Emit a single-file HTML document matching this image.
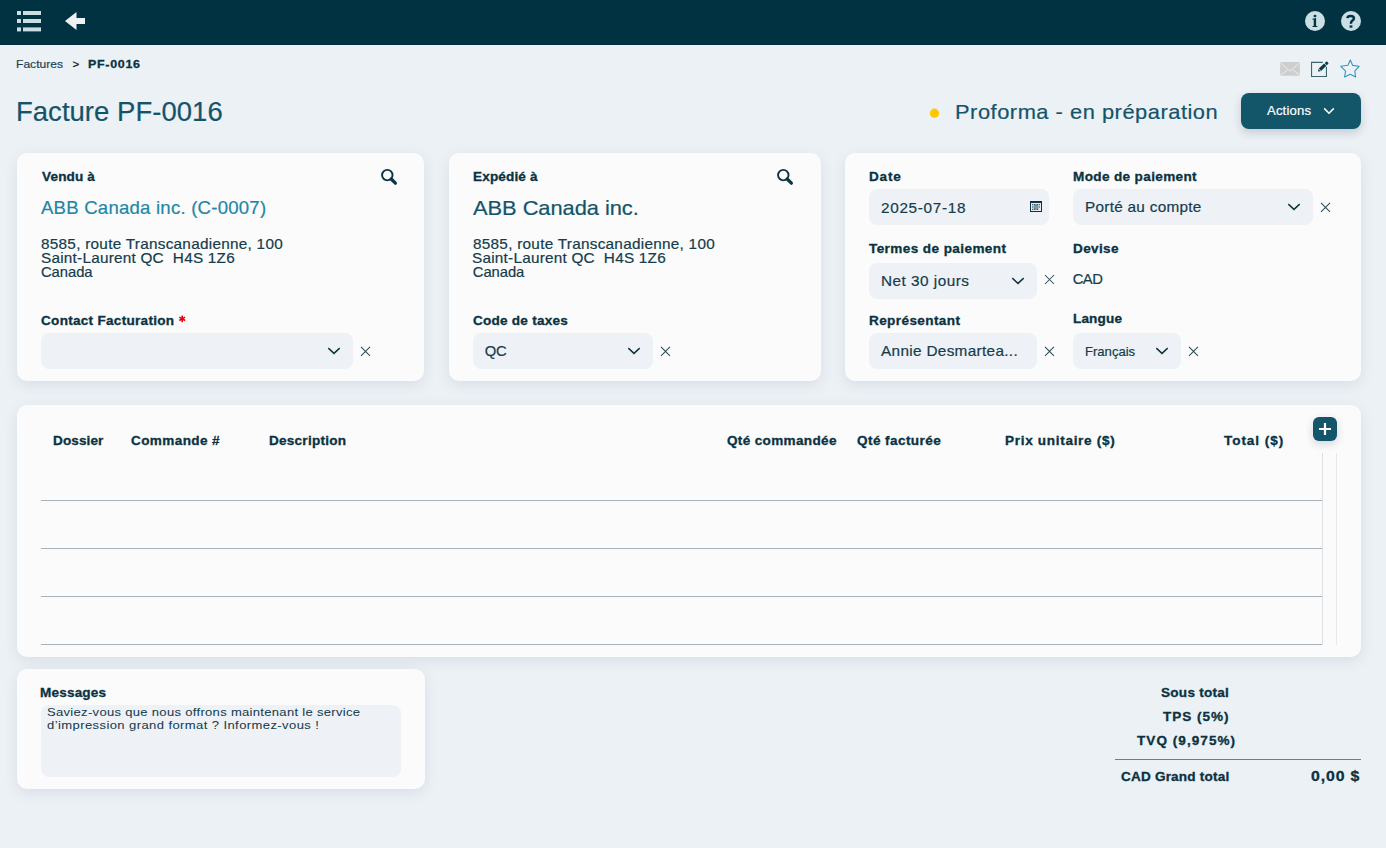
<!DOCTYPE html>
<html><head><meta charset="utf-8"><title>Facture PF-0016</title>
<style>
html,body{margin:0;padding:0;}
body{width:1386px;height:848px;overflow:hidden;position:relative;background:#ecf1f5;font-family:"Liberation Sans",sans-serif;}
.t{position:absolute;white-space:pre;transform-origin:0 0;-webkit-text-stroke:0.2px currentColor;}
.b{-webkit-text-stroke:0.3px currentColor;}
.a{position:absolute;}
.card{position:absolute;background:#fbfbfb;border-radius:10px;box-shadow:0 4px 14px rgba(40,70,110,0.10);}
.inp{position:absolute;background:#eef2f6;border-radius:8px;}
svg{position:absolute;left:0;top:0;overflow:visible;}
</style></head><body>
<div class="a" style="left:0;top:0;width:1386px;height:45px;background:#013241"></div>
<div class="card" style="left:17px;top:153px;width:407px;height:228px"></div>
<div class="card" style="left:449px;top:153px;width:372px;height:228px"></div>
<div class="card" style="left:845px;top:153px;width:516px;height:228px"></div>
<div class="card" style="left:17px;top:405px;width:1344px;height:252px"></div>
<div class="card" style="left:17px;top:669px;width:408px;height:120px"></div>
<div class="inp" style="left:41px;top:333px;width:312px;height:36px"></div>
<div class="inp" style="left:473px;top:333px;width:180px;height:36px"></div>
<div class="inp" style="left:869px;top:189px;width:180px;height:36px"></div>
<div class="inp" style="left:1073px;top:189px;width:240px;height:36px"></div>
<div class="inp" style="left:869px;top:263px;width:168px;height:36px"></div>
<div class="inp" style="left:869px;top:333px;width:168px;height:36px"></div>
<div class="inp" style="left:1073px;top:333px;width:108px;height:36px"></div>
<div class="inp" style="left:41px;top:705px;width:360px;height:72px"></div>
<div class="a" style="left:1241px;top:93px;width:120px;height:36px;background:#135569;border-radius:8px;box-shadow:0 4px 10px rgba(20,40,70,0.18)"></div>
<div class="a" style="left:1313px;top:417px;width:24px;height:24px;background:#135569;border-radius:6px;box-shadow:0 3px 8px rgba(20,40,70,0.18)"></div>
<svg width="1386" height="848" viewBox="0 0 1386 848">
 <g fill="#c9dde2">
  <rect x="17" y="11" width="4" height="4"/><rect x="23" y="11" width="18" height="4"/>
  <rect x="17" y="19" width="4" height="4"/><rect x="23" y="19" width="18" height="4"/>
  <rect x="17" y="27.4" width="4" height="4"/><rect x="23" y="27.4" width="18" height="4"/>
 </g>
 <polygon fill="#eef2f5" points="65,21 76.5,12 76.5,18 85,18 85,24 76.5,24 76.5,30"/>
 <circle cx="1315" cy="21" r="10" fill="#c9dfe4"/>
 <circle cx="1351" cy="21" r="10" fill="#c9dfe4"/>
 <g fill="#013241">
  <ellipse cx="1315" cy="15.9" rx="1.45" ry="1.25"/>
  <path d="M1312.3 18.7 L1316.1 18.1 V25.9 H1317.4 V27.1 H1312.5 V25.9 H1313.7 V19.5 H1312.3 Z"/>
 </g>
 <path d="M1347.4 18.2 Q1347.6 15.9 1350.6 15.9 Q1353.9 15.9 1353.9 18.3 Q1353.9 19.8 1352.3 20.7 Q1350.9 21.5 1350.9 23.8" fill="none" stroke="#013241" stroke-width="2.5"/>
 <rect x="1349.6" y="25.4" width="2.8" height="2.3" fill="#013241"/>
 <rect x="1280.2" y="62" width="19.7" height="13.8" rx="1.3" fill="#cecece"/>
 <path d="M1280.8 62.8 L1288.2 69.8 Q1290.1 71.3 1292.1 69.8 L1298.9 63.1 M1280.9 74.9 L1287.2 70.2 M1299.4 74.6 L1293.1 70.3" stroke="#e9eef1" stroke-width="0.95" fill="none"/>
 <path d="M1322.8 62.35 H1311.55 V76.55 H1326.45 V66.8" fill="none" stroke="#3e6470" stroke-width="1.1"/>
 <g transform="translate(1318 71.6) rotate(-43.8)" fill="#0e3a48">
  <path d="M0 0 L2.1 -1.6 L2.1 1.6 Z"/>
  <rect x="2.7" y="-1.65" width="7.3" height="3.3"/>
  <rect x="10.6" y="-1.65" width="3" height="3.3" rx="1.3"/>
 </g>
 <polygon points="1350.3,60.1 1352.7,65.4 1359.1,66.3 1354.8,71.2 1355.6,77.1 1350.3,74.3 1344.6,77 1345.6,71.2 1340.8,66.3 1347.9,65.3" fill="none" stroke="#3398bd" stroke-width="1.1" stroke-linejoin="round"/>
 <circle cx="934.5" cy="113.2" r="4.6" fill="#ffc700"/>
 <path d="M1324.2 108.4 L1329 113.2 L1333.8 108.4" fill="none" stroke="#ffffff" stroke-width="1.5"/>
 <g fill="none" stroke="#0e3443">
  <circle cx="387.3" cy="175.1" r="5.25" stroke-width="1.95"/>
  <path d="M391.2 179 L395.4 183.2" stroke-width="3.2" stroke-linecap="round"/>
  <circle cx="783.3" cy="175.1" r="5.25" stroke-width="1.95"/>
  <path d="M787.2 179 L791.4 183.2" stroke-width="3.2" stroke-linecap="round"/>
 </g>
 <g fill="none" stroke="#0e3443" stroke-width="1.45">
  <path d="M328.3 348.1 L334.0 353.4 L339.7 348.1"/>
  <path d="M628.3 348.1 L634.0 353.4 L639.7 348.1"/>
  <path d="M1288.3 204.1 L1294.0 209.4 L1299.7 204.1"/>
  <path d="M1012.3 278.1 L1018.0 283.4 L1023.7 278.1"/>
  <path d="M1156.3 348.1 L1162.0 353.4 L1167.7 348.1"/>
 </g>
 <g fill="none" stroke="#2b4c58" stroke-width="1.05">
  <path d="M361 346.8 L370 355.8 M370 346.8 L361 355.8"/>
  <path d="M661 346.8 L670 355.8 M670 346.8 L661 355.8"/>
  <path d="M1321 202.8 L1330 211.8 M1330 202.8 L1321 211.8"/>
  <path d="M1045 275 L1054 284 M1054 275 L1045 284"/>
  <path d="M1045 346.8 L1054 355.8 M1054 346.8 L1045 355.8"/>
  <path d="M1189 346.8 L1198 355.8 M1198 346.8 L1189 355.8"/>
 </g>
 <g>
  <rect x="1030" y="201" width="12" height="11" fill="#0e3443"/>
  <rect x="1031" y="203" width="10" height="8" fill="#e6ecef"/>
  <rect x="1033.6" y="204.2" width="4.8" height="5.6" fill="#7d959d"/>
  <g fill="#3f5f6a">
   <rect x="1032" y="204" width="1.2" height="1.2"/><rect x="1034" y="204" width="1.2" height="1.2"/><rect x="1036.8" y="204" width="1.2" height="1.2"/><rect x="1038.8" y="204" width="1.2" height="1.2"/>
   <rect x="1032" y="206.4" width="1.2" height="1.2"/><rect x="1038.8" y="206.4" width="1.2" height="1.2"/>
   <rect x="1032" y="208.8" width="1.2" height="1.2"/><rect x="1034" y="208.8" width="1.2" height="1.2"/><rect x="1036.8" y="208.8" width="1.2" height="1.2"/>
  </g>
 </g>
 <g fill="#a3b2bd">
  <rect x="41" y="500" width="1281" height="1"/>
  <rect x="41" y="548" width="1281" height="1"/>
  <rect x="41" y="596" width="1281" height="1"/>
  <rect x="41" y="644" width="1281" height="1"/>
 </g>
 <rect x="1322" y="453" width="1" height="192" fill="#e0e0e0"/>
 <rect x="1336" y="453" width="1" height="192" fill="#e8e8e8"/>
 <path d="M1325 423 V435 M1319 429 H1331" stroke="#ffffff" stroke-width="2.2"/>
 <rect x="1115" y="759" width="246" height="1" fill="#7a7a7a"/>
 <path d="M182.2 315.6 v6.6 M179.3 317.2 l5.8 3.3 M185.1 317.2 l-5.8 3.3" stroke="#e8000b" stroke-width="1.55"/>
</svg>

<div id="bc1" class="t" style="left:16.00px;top:58.15px;font-size:11.63px;line-height:11.63px;font-weight:400;letter-spacing:0.034px;transform:scaleX(1.0350);color:#1d4453">Factures</div>
<div id="bc2" class="t" style="left:72.38px;top:58.15px;font-size:11.63px;line-height:11.63px;font-weight:400;letter-spacing:4.138px;color:#111111">&gt;</div>
<div id="bc3" class="t b" style="left:88.00px;top:58.15px;font-size:11.63px;line-height:11.63px;font-weight:700;letter-spacing:0.656px;transform:scaleX(1.0700);color:#0b3241">PF-0016</div>
<div id="title" class="t" style="left:15.97px;top:97.54px;font-size:27.47px;line-height:27.47px;font-weight:400;letter-spacing:0.041px;color:#14546a">Facture PF-0016</div>
<div id="status" class="t" style="left:955.00px;top:101.21px;font-size:21.13px;line-height:21.13px;font-weight:400;letter-spacing:0.497px;transform:scaleX(1.0350);color:#14546a">Proforma - en préparation</div>
<div id="actions" class="t" style="left:1267.00px;top:105.17px;font-size:12.67px;line-height:12.67px;font-weight:400;letter-spacing:0.157px;transform:scaleX(1.0350);color:#ffffff">Actions</div>
<div id="c1l" class="t b" style="left:42.00px;top:171.27px;font-size:12.67px;line-height:12.67px;font-weight:700;letter-spacing:0.149px;transform:scaleX(1.0700);color:#0b3241">Vendu à</div>
<div id="c1n" class="t" style="left:41.00px;top:199.79px;font-size:17.97px;line-height:17.97px;font-weight:400;letter-spacing:0.213px;transform:scaleX(1.0350);color:#1f87a5">ABB Canada inc. (C-0007)</div>
<div id="c1a1" class="t" style="left:41.00px;top:236.97px;font-size:14.8px;line-height:14.8px;font-weight:400;letter-spacing:0.262px;transform:scaleX(1.0350);color:#163c4b">8585, route Transcanadienne, 100</div>
<div id="c1a2" class="t" style="left:41.00px;top:251.27px;font-size:14.8px;line-height:14.8px;font-weight:400;letter-spacing:0.223px;transform:scaleX(1.0350);color:#163c4b">Saint-Laurent QC  H4S 1Z6</div>
<div id="c1a3" class="t" style="left:40.95px;top:264.97px;font-size:14.8px;line-height:14.8px;font-weight:400;letter-spacing:-0.046px;color:#163c4b">Canada</div>
<div id="c1c" class="t b" style="left:41.00px;top:315.27px;font-size:12.67px;line-height:12.67px;font-weight:700;letter-spacing:0.268px;transform:scaleX(1.0700);color:#0b3241">Contact Facturation</div>
<div id="c2l" class="t b" style="left:473.00px;top:171.27px;font-size:12.67px;line-height:12.67px;font-weight:700;letter-spacing:0.151px;transform:scaleX(1.0700);color:#0b3241">Expédié à</div>
<div id="c2n" class="t" style="left:473.00px;top:196.91px;font-size:21.13px;line-height:21.13px;font-weight:400;letter-spacing:-0.048px;transform:scaleX(1.0350);color:#14546a">ABB Canada inc.</div>
<div id="c2a1" class="t" style="left:473.00px;top:236.97px;font-size:14.8px;line-height:14.8px;font-weight:400;letter-spacing:0.262px;transform:scaleX(1.0350);color:#163c4b">8585, route Transcanadienne, 100</div>
<div id="c2a2" class="t" style="left:472.00px;top:251.27px;font-size:14.8px;line-height:14.8px;font-weight:400;letter-spacing:0.223px;transform:scaleX(1.0350);color:#163c4b">Saint-Laurent QC  H4S 1Z6</div>
<div id="c2a3" class="t" style="left:472.75px;top:264.97px;font-size:14.8px;line-height:14.8px;font-weight:400;letter-spacing:-0.046px;color:#163c4b">Canada</div>
<div id="c2c" class="t b" style="left:473.00px;top:315.27px;font-size:12.67px;line-height:12.67px;font-weight:700;letter-spacing:0.229px;transform:scaleX(1.0700);color:#0b3241">Code de taxes</div>
<div id="qc" class="t" style="left:484.87px;top:344.47px;font-size:14.8px;line-height:14.8px;font-weight:400;letter-spacing:-0.484px;color:#163c4b">QC</div>
<div id="c3d" class="t b" style="left:869.00px;top:170.57px;font-size:12.67px;line-height:12.67px;font-weight:700;letter-spacing:0.733px;transform:scaleX(1.0700);color:#0b3241">Date</div>
<div id="date" class="t" style="left:881.00px;top:201.47px;font-size:14.8px;line-height:14.8px;font-weight:400;letter-spacing:0.663px;transform:scaleX(1.0350);color:#163c4b">2025-07-18</div>
<div id="c3m" class="t b" style="left:1073.00px;top:170.57px;font-size:12.67px;line-height:12.67px;font-weight:700;letter-spacing:0.341px;transform:scaleX(1.0700);color:#0b3241">Mode de paiement</div>
<div id="mode" class="t" style="left:1085.00px;top:200.27px;font-size:14.8px;line-height:14.8px;font-weight:400;letter-spacing:0.275px;transform:scaleX(1.0350);color:#163c4b">Porté au compte</div>
<div id="c3t" class="t b" style="left:869.00px;top:243.27px;font-size:12.67px;line-height:12.67px;font-weight:700;letter-spacing:0.386px;transform:scaleX(1.0700);color:#0b3241">Termes de paiement</div>
<div id="net" class="t" style="left:881.00px;top:274.47px;font-size:14.8px;line-height:14.8px;font-weight:400;letter-spacing:0.472px;transform:scaleX(1.0350);color:#163c4b">Net 30 jours</div>
<div id="c3dv" class="t b" style="left:1073.00px;top:242.57px;font-size:12.67px;line-height:12.67px;font-weight:700;letter-spacing:0.330px;transform:scaleX(1.0700);color:#0b3241">Devise</div>
<div id="cad" class="t" style="left:1072.63px;top:271.67px;font-size:14.8px;line-height:14.8px;font-weight:400;letter-spacing:-0.448px;color:#163c4b">CAD</div>
<div id="c3r" class="t b" style="left:869.00px;top:315.27px;font-size:12.67px;line-height:12.67px;font-weight:700;letter-spacing:0.372px;transform:scaleX(1.0700);color:#0b3241">Représentant</div>
<div id="annie" class="t" style="left:881.00px;top:344.37px;font-size:14.8px;line-height:14.8px;font-weight:400;letter-spacing:0.317px;transform:scaleX(1.0350);color:#163c4b">Annie Desmartea...</div>
<div id="c3lg" class="t b" style="left:1073.00px;top:313.27px;font-size:12.67px;line-height:12.67px;font-weight:700;letter-spacing:0.148px;transform:scaleX(1.0700);color:#0b3241">Langue</div>
<div id="fr" class="t" style="left:1085.00px;top:346.17px;font-size:12.67px;line-height:12.67px;font-weight:400;letter-spacing:-0.013px;transform:scaleX(1.0350);color:#163c4b">Français</div>
<div id="th1" class="t b" style="left:53.00px;top:435.27px;font-size:12.67px;line-height:12.67px;font-weight:700;letter-spacing:0.106px;transform:scaleX(1.0700);color:#0b3241">Dossier</div>
<div id="th2" class="t b" style="left:131.00px;top:435.27px;font-size:12.67px;line-height:12.67px;font-weight:700;letter-spacing:0.373px;transform:scaleX(1.0700);color:#0b3241">Commande #</div>
<div id="th3" class="t b" style="left:269.00px;top:435.27px;font-size:12.67px;line-height:12.67px;font-weight:700;letter-spacing:0.232px;transform:scaleX(1.0700);color:#0b3241">Description</div>
<div id="th4" class="t b" style="left:727.00px;top:435.27px;font-size:12.67px;line-height:12.67px;font-weight:700;letter-spacing:0.318px;transform:scaleX(1.0700);color:#0b3241">Qté commandée</div>
<div id="th5" class="t b" style="left:857.00px;top:435.27px;font-size:12.67px;line-height:12.67px;font-weight:700;letter-spacing:0.401px;transform:scaleX(1.0700);color:#0b3241">Qté facturée</div>
<div id="th6" class="t b" style="left:1005.00px;top:435.27px;font-size:12.67px;line-height:12.67px;font-weight:700;letter-spacing:0.648px;transform:scaleX(1.0700);color:#0b3241">Prix unitaire ($)</div>
<div id="th7" class="t b" style="left:1224.00px;top:435.27px;font-size:12.67px;line-height:12.67px;font-weight:700;letter-spacing:0.876px;transform:scaleX(1.0700);color:#0b3241">Total ($)</div>
<div id="msgl" class="t b" style="left:40.00px;top:687.27px;font-size:12.67px;line-height:12.67px;font-weight:700;letter-spacing:0.177px;transform:scaleX(1.0700);color:#0b3241">Messages</div>
<div id="msg1" class="t" style="left:47.00px;top:706.45px;font-size:11.63px;line-height:11.63px;font-weight:400;letter-spacing:0.276px;transform:scaleX(1.1200);-webkit-text-stroke:0.05px currentColor;color:#163c4b">Saviez-vous que nous offrons maintenant le service</div>
<div id="msg2" class="t" style="left:47.00px;top:718.85px;font-size:11.63px;line-height:11.63px;font-weight:400;letter-spacing:0.365px;transform:scaleX(1.1200);-webkit-text-stroke:0.05px currentColor;color:#163c4b">d’impression grand format ? Informez-vous !</div>
<div id="tot1" class="t b" style="left:1161.00px;top:687.37px;font-size:12.67px;line-height:12.67px;font-weight:700;letter-spacing:0.251px;transform:scaleX(1.0700);color:#0b3241">Sous total</div>
<div id="tot2" class="t b" style="left:1163.00px;top:711.17px;font-size:12.67px;line-height:12.67px;font-weight:700;letter-spacing:0.895px;transform:scaleX(1.0700);color:#0b3241">TPS (5%)</div>
<div id="tot3" class="t b" style="left:1137.00px;top:734.97px;font-size:12.67px;line-height:12.67px;font-weight:700;letter-spacing:0.979px;transform:scaleX(1.0700);color:#0b3241">TVQ (9,975%)</div>
<div id="tot4" class="t b" style="left:1121.00px;top:771.27px;font-size:12.67px;line-height:12.67px;font-weight:700;letter-spacing:0.189px;transform:scaleX(1.0700);color:#0b3241">CAD Grand total</div>
<div id="tot5" class="t b" style="left:1311.00px;top:769.47px;font-size:14.8px;line-height:14.8px;font-weight:700;letter-spacing:0.815px;transform:scaleX(1.0700);color:#0b3241">0,00 $</div>
</body></html>
